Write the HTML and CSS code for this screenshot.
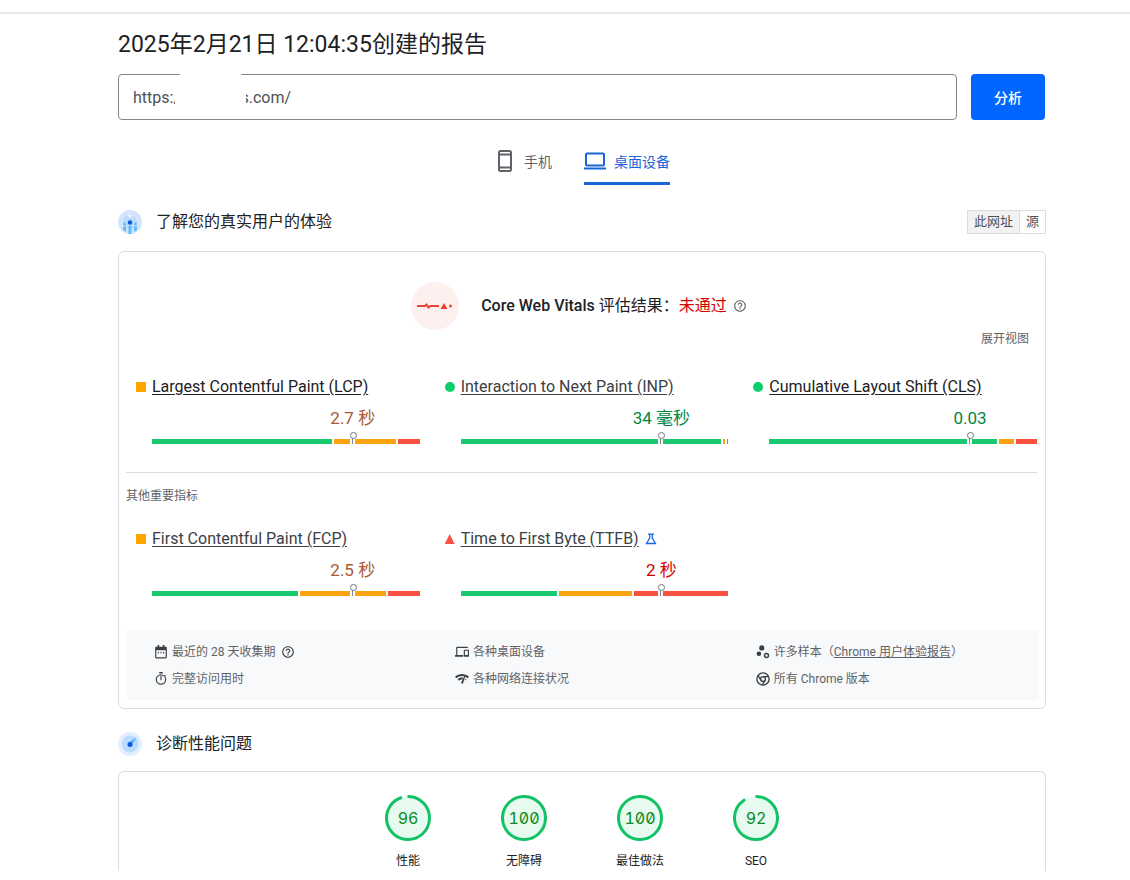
FILE: index.html
```html
<!DOCTYPE html>
<html lang="zh-CN">
<head>
<meta charset="utf-8">
<meta name="viewport" content="width=device-width, initial-scale=1">
<title>PageSpeed Insights</title>
<link rel="stylesheet" href="styles.css">
</head>
<body>
<svg class="sprite" aria-hidden="true">
  <symbol id="help" viewBox="0 0 24 24"><path d="M11 18h2v-2h-2v2zm1-16C6.480 2 2 6.480 2 12s4.480 10 10 10 10-4.480 10-10S17.520 2 12 2zm0 18c-4.410 0-8-3.590-8-8s3.590-8 8-8 8 3.590 8 8-3.590 8-8 8zm0-14c-2.210 0-4 1.790-4 4h2c0-1.100.9-2 2-2s2 .9 2 2c0 2-3 1.750-3 5h2c0-2.250 3-2.500 3-5 0-2.210-1.790-4-4-4z"/></symbol>
</svg>
<header class="topbar"></header>
<main class="page">
  <h1 class="title">2025年2月21日 12:04:35创建的报告</h1>

  <form class="search">
    <div class="url-field">
      <input class="url" type="text" aria-label="网址" value="https://              s.com/">
      <span class="mask"></span>
    </div>
    <button class="analyze" type="button">分析</button>
  </form>

  <nav class="tabs">
    <button class="tab" type="button">
      <svg class="phone" viewBox="0 0 16 22" aria-hidden="true"><rect x="2" y="1" width="12" height="20" rx="1.500"/><path d="M2 4.500h12M2 17.500h12"/></svg>
      手机
    </button>
    <button class="tab active" type="button">
      <svg class="laptop" viewBox="0 0 22 18" aria-hidden="true"><rect x="2" y="1.500" width="18" height="12" rx="1"/><path d="M0 16.500h22"/></svg>
      桌面设备
    </button>
  </nav>

  <section>
    <div class="section-head">
      <svg class="badge" viewBox="0 0 24 24" aria-hidden="true">
        <circle cx="12" cy="12" r="12" fill="#d2e5fd"/>
        <circle cx="12" cy="12" r="7" fill="#bcdcfd"/>
        <circle cx="12" cy="6" r="1.500" fill="#f4f9ff"/>
        <path d="M5 16.500h3V22l-3-2zM10.500 16h3v8h-3zM16 16.500h3V20l-3 2z" fill="#5ebcf9"/>
        <circle cx="6.500" cy="14" r="1.500" fill="#5ebcf9"/><circle cx="17.500" cy="14" r="1.500" fill="#5ebcf9"/>
        <circle cx="12" cy="12.500" r="2.200" fill="#0b57e0"/>
      </svg>
      <h2>了解您的真实用户的体验</h2>
      <div class="scope">
        <button class="scope-btn selected" type="button">此网址</button><button class="scope-btn" type="button">源</button>
      </div>
    </div>

    <div class="card">
      <div class="verdict">
        <svg class="pulse" viewBox="0 0 48 48" aria-hidden="true">
          <circle cx="24" cy="24" r="24" fill="#fef0ef"/>
          <path d="M6 24h8l1.500-1.500 2 3 2-1.500H28" fill="none" stroke="#ea4335" stroke-width="2"/>
          <path d="M33 21l3.500 6h-7z" fill="#ea4335"/><circle cx="39.500" cy="24" r="1.500" fill="#ea4335"/>
        </svg>
        <p class="verdict-text"><strong>Core Web Vitals</strong> 评估结果：<span class="failed">未通过</span></p>
        <svg class="help" aria-hidden="true"><use href="#help"/></svg>
      </div>
      <div class="expand-row"><button class="expand" type="button">展开视图</button></div>

      <div class="metrics">
        <div class="metric average">
          <div class="name"><i class="mark square"></i><a class="dark" href="#">Largest Contentful Paint (LCP)</a></div>
          <div class="gauge"><div class="value">2.7 秒</div>
            <div class="track"><span class="good" style="flex-grow:182"></span><span class="mid" style="flex-grow:62"></span><span class="poor" style="flex-grow:22"></span></div><i class="pin"></i></div>
        </div>
        <div class="metric fast">
          <div class="name"><i class="mark dot"></i><a href="#">Interaction to Next Paint (INP)</a></div>
          <div class="gauge"><div class="value">34 毫秒</div>
            <div class="track"><span class="good" style="flex-grow:261"></span><span class="mid" style="flex-grow:2"></span><span class="poor" style="flex-grow:1"></span></div><i class="pin"></i></div>
        </div>
        <div class="metric fast">
          <div class="name"><i class="mark dot"></i><a class="dark" href="#">Cumulative Layout Shift (CLS)</a></div>
          <div class="gauge"><div class="value">0.03</div>
            <div class="track"><span class="good" style="flex-grow:228"></span><span class="mid" style="flex-grow:15"></span><span class="poor" style="flex-grow:21"></span></div><i class="pin"></i></div>
        </div>
      </div>

      <h3 class="other">其他重要指标</h3>

      <div class="metrics">
        <div class="metric average">
          <div class="name"><i class="mark square"></i><a href="#">First Contentful Paint (FCP)</a></div>
          <div class="gauge"><div class="value">2.5 秒</div>
            <div class="track"><span class="good" style="flex-grow:146"></span><span class="mid" style="flex-grow:86"></span><span class="poor" style="flex-grow:32"></span></div><i class="pin"></i></div>
        </div>
        <div class="metric slow">
          <div class="name"><i class="mark triangle"></i><a href="#">Time to First Byte (TTFB)</a>
            <svg class="flask" viewBox="0 0 12 12" aria-hidden="true"><path d="M3 1.200h6M4.700 1v4L1.500 10.500h9L7.300 5V1"/></svg></div>
          <div class="gauge"><div class="value">2 秒</div>
            <div class="track"><span class="good" style="flex-grow:97"></span><span class="mid" style="flex-grow:73"></span><span class="poor" style="flex-grow:95"></span></div><i class="pin"></i></div>
        </div>
      </div>

      <ul class="facts">
        <li><svg viewBox="0 0 24 24" aria-hidden="true"><path d="M20 3h-2V0h-3v3H9V0H6v3H4C2.900 3 2 3.900 2 5v16c0 1.100.9 2 2 2h16c1.100 0 2-.9 2-2V5c0-1.100-.9-2-2-2zm0 18H4V9h16v12zM6.500 12h2v2h-2zm4.500 0h2v2h-2zm4.500 0h2v2h-2z"/></svg>最近的 28 天收集期<svg class="help" aria-hidden="true"><use href="#help"/></svg></li>
        <li><svg viewBox="0 0 24 24" aria-hidden="true"><path d="M4 5h18V3H4c-1.100 0-2 .9-2 2v12H0v3h14v-3H4V5zm19 3h-7c-.6 0-1 .4-1 1v10c0 .6.4 1 1 1h7c.6 0 1-.4 1-1V9c0-.6-.4-1-1-1zm-1 9h-5v-7h5v7z"/></svg>各种桌面设备</li>
        <li><svg viewBox="0 0 24 24" aria-hidden="true"><circle cx="10" cy="5" r="4.500"/><circle cx="5" cy="15" r="4"/><circle cx="18" cy="18" r="3.500" fill="none" stroke="#3c4043" stroke-width="2.500"/></svg><span>许多样本（<a href="#">Chrome 用户体验报告</a>）</span></li>
        <li><svg viewBox="0 0 24 24" aria-hidden="true"><path d="M15 0H9v2.500h6V0zm-4 14h2V7h-2v7zm8-6.600l1.500-1.500-1.400-1.400L17.600 6A9 9 0 1 0 19 7.400zM12 20a7 7 0 1 1 0-14 7 7 0 0 1 0 14z"/></svg>完整访问用时</li>
        <li><svg viewBox="0 0 24 24" aria-hidden="true"><path d="M0 8c7-6 17-6 24 0l-2.500 2.500C15.500 5.500 8.500 5.500 2.500 10.500zM4.500 12.500c2.500-2.500 6-3.500 9.500-2.700l-1.500 3c-2-.2-4 .6-5.500 2.200zM16 7l1.500.500-3.500 11.500c-.5 1.700-3 1.700-3.500 0-.1-.5 0-1 .3-1.500zM18 11.200l1.700 1.300L17.500 15z"/></svg>各种网络连接状况</li>
        <li><svg viewBox="0 0 24 24" aria-hidden="true"><g fill="none" stroke="#3c4043" stroke-width="2.300"><circle cx="12" cy="12" r="10.500"/><circle cx="12" cy="12" r="4.200"/><path d="M12 7.800h9.500M8.400 14.100L3.600 5.800M15.600 14.100l-4.800 8.300"/></g></svg>所有 Chrome 版本</li>
      </ul>
    </div>
  </section>

  <section>
    <div class="section-head second">
      <svg class="badge" viewBox="0 0 24 24" aria-hidden="true">
        <circle cx="12" cy="12" r="12" fill="#e2effe"/><circle cx="12" cy="12" r="8.500" fill="#bcdcfd"/>
        <path d="M10 10.500L19 5l-5.500 9z" fill="#56b8f8"/><circle cx="12" cy="12.500" r="2.500" fill="#0b57e0"/>
      </svg>
      <h2>诊断性能问题</h2>
    </div>
    <div class="card scores">
      <a class="score" href="#"><span class="ring"><svg viewBox="0 0 46 46" aria-hidden="true"><circle class="disc" cx="23" cy="23" r="22"/><circle class="arc" cx="23" cy="23" r="21.500" pathLength="100" stroke-dasharray="94 6"/></svg><b>96</b></span>性能</a>
      <a class="score" href="#"><span class="ring"><svg viewBox="0 0 46 46" aria-hidden="true"><circle class="disc" cx="23" cy="23" r="22"/><circle class="arc" cx="23" cy="23" r="21.500"/></svg><b>100</b></span>无障碍</a>
      <a class="score" href="#"><span class="ring"><svg viewBox="0 0 46 46" aria-hidden="true"><circle class="disc" cx="23" cy="23" r="22"/><circle class="arc" cx="23" cy="23" r="21.500"/></svg><b>100</b></span>最佳做法</a>
      <a class="score" href="#"><span class="ring"><svg viewBox="0 0 46 46" aria-hidden="true"><circle class="disc" cx="23" cy="23" r="22"/><circle class="arc" cx="23" cy="23" r="21.500" pathLength="100" stroke-dasharray="90 10"/></svg><b>92</b></span>SEO</a>
    </div>
  </section>
</main>
</body>
</html>
```
FILE: styles.css
```css
* { box-sizing: border-box; }
body {
  margin: 0;
  background: #fff;
  color: #202124;
  font: 12px/18px Roboto, "Noto Sans CJK SC", sans-serif;
}
h1, h2, h3, p, ul { margin: 0; padding: 0; font-weight: 400; }
button, input { font-family: inherit; }
button { cursor: pointer; }
.sprite { display: none; }
.topbar { height: 14px; border-bottom: 2px solid #e6e7e8; }
.page { padding: 16px 84px 0 118px; }
.title { font-size: 23px; line-height: 30px; }

.search { display: flex; gap: 14px; margin: 14px 1px 0 0; }
.url-field { position: relative; flex: 1; }
.url {
  display: block;
  width: 100%;
  height: 46px;
  padding: 0 14px;
  border: 1px solid #80868b;
  border-radius: 4px;
  color: #4d5156;
  font-size: 16px;
}
.mask {
  position: absolute;
  top: -2px;
  left: 57px;
  width: 71px;
  height: 47px;
  border-radius: 12px 12px 0 0;
  background: #fff;
}
.analyze {
  width: 74px;
  border: 0;
  border-radius: 4px;
  background: #06f;
  color: #fff;
  font-size: 14px;
  font-weight: 500;
}

.tabs { display: flex; justify-content: center; gap: 32px; margin-top: 26px; padding-left: 3px; }
.tab {
  display: flex;
  align-items: center;
  gap: 11px;
  height: 39px;
  padding: 0 0 7px;
  border: 0;
  border-bottom: 3px solid transparent;
  background: none;
  color: #5f6368;
  font-size: 14px;
}
.tab svg { fill: none; stroke: currentColor; stroke-width: 2; }
.tab.active { gap: 8px; border-color: #1a66d6; color: #1a66d6; }
.phone { width: 16px; height: 22px; }
.laptop { width: 22px; height: 18px; }

.section-head { display: flex; align-items: center; gap: 14px; margin-top: 25px; height: 24px; }
.section-head.second { margin-top: 23px; }
.badge { width: 24px; height: 24px; }
h2 { font-size: 16px; line-height: 24px; }
.scope { display: flex; margin-left: auto; border: 1px solid #dadce0; }
.scope-btn { height: 22px; padding: 0 6px; border: 0; background: #fff; color: #4d5156; font-size: 13px; line-height: 20px; }
.scope-btn.selected { background: #f1f1f1; border-right: 1px solid #dadce0; }

.card { margin-top: 17px; border: 1px solid #dadce0; border-radius: 6px; padding: 30px 0 8px; }
.verdict { display: flex; justify-content: center; align-items: center; height: 48px; padding-right: 6px; }
.pulse { width: 48px; height: 48px; margin-right: 22px; }
.verdict-text { font-size: 16px; line-height: 24px; }
.verdict-text strong { font-weight: 500; }
.failed { color: #d50000; }
.help { width: 14px; height: 14px; margin-left: 6px; fill: #5f6368; }
.expand-row { display: flex; justify-content: flex-end; padding-right: 16px; }
.expand { padding: 0; border: 0; background: none; color: #5f6368; font-size: 12px; line-height: 18px; }

.metrics { display: grid; grid-template-columns: repeat(3, 1fr); padding-top: 28px; }
.metric { padding: 0 8px 0 17px; }
.name { display: flex; align-items: center; gap: 6px; font-size: 16px; line-height: 22px; }
.name a { color: #3c4043; text-underline-offset: 2px; }
.name a.dark { color: #202124; }
.mark { width: 10px; height: 10px; }
.square { background: #ffa400; }
.dot { border-radius: 50%; background: #0cce6b; }
.triangle { background: #ff4e42; clip-path: polygon(50% 0, 100% 100%, 0 100%); }
.flask { width: 12px; height: 12px; fill: none; stroke: #1a66e6; stroke-width: 1.300; }
.gauge { position: relative; margin: 7px 0 0 16px; }
.value { width: 150%; font-size: 17px; line-height: 26px; text-align: center; }
.average .value { color: #a85833; }
.fast .value { color: #018642; }
.slow .value { color: #d50000; }
.track { display: flex; gap: 2px; height: 5px; margin-top: 8px; }
.track span { flex-basis: 0; }
.good { background: #18c96e; }
.mid { background: #fca311; }
.poor { background: #f9503f; }
.pin {
  position: absolute;
  bottom: 0;
  left: 75%;
  width: 5px;
  height: 6px;
  margin-left: -3px;
  background: linear-gradient(#80868b, #80868b) center / 1px 100% no-repeat #fff;
}
.pin::before {
  content: "";
  position: absolute;
  bottom: 5px;
  left: 0;
  width: 5px;
  height: 5px;
  border: 1px solid #70757a;
  border-radius: 50%;
  background: #fff;
}

.other {
  margin: 28px 8px 0 7px;
  padding-top: 14px;
  border-top: 1px solid #dadce0;
  color: #5f6368;
  font-size: 12px;
  line-height: 18px;
}
.other + .metrics { padding-top: 23px; }

.facts {
  display: grid;
  grid-template-columns: 34fr 34fr 32fr;
  row-gap: 9px;
  margin: 34px 6px 0 7px;
  padding: 13px 0 12px 28px;
  border-radius: 4px;
  background: #f8f9fa;
  color: #5f6368;
  list-style: none;
}
.facts li { display: flex; align-items: center; gap: 4px; }
.facts svg { width: 14px; height: 14px; fill: #3c4043; }
.facts .help { margin-left: 2px; }
.facts a { color: inherit; }

.scores { display: flex; justify-content: center; margin-top: 15px; border-bottom: 0; border-radius: 6px 6px 0 0; padding: 23px 0 1px; }
.score { display: flex; flex-direction: column; align-items: center; gap: 11px; width: 116px; color: #202124; text-decoration: none; }
.ring { display: grid; place-items: center; }
.ring > * { grid-area: 1 / 1; }
.ring svg { width: 46px; height: 46px; overflow: visible; }
.ring b { color: #0a8a20; font: 400 16px/20px Inter, sans-serif; font-feature-settings: "zero", "tnum"; }
.disc { fill: #e6faf0; }
.arc { fill: none; stroke: #12c264; stroke-width: 3; stroke-linecap: round; transform: rotate(-88deg); transform-origin: center; }
```
